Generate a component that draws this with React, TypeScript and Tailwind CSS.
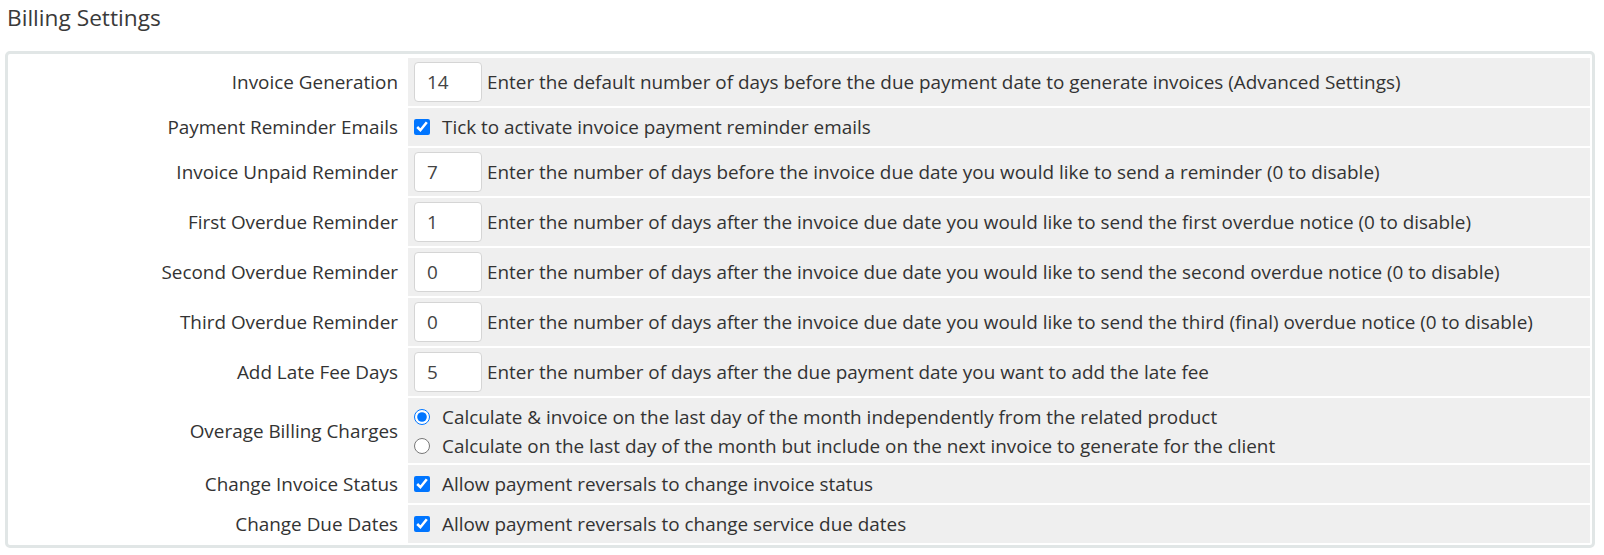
import React from 'react';

type Row =
  | { label: string; kind: 'input'; value: string; text: string }
  | { label: string; kind: 'check'; text: string }
  | { label: string; kind: 'radio'; options: { text: string; checked: boolean }[] };

const rows: Row[] = [
  {
    label: 'Invoice Generation',
    kind: 'input',
    value: '14',
    text: 'Enter the default number of days before the due payment date to generate invoices (Advanced Settings)',
  },
  { label: 'Payment Reminder Emails', kind: 'check', text: 'Tick to activate invoice payment reminder emails' },
  {
    label: 'Invoice Unpaid Reminder',
    kind: 'input',
    value: '7',
    text: 'Enter the number of days before the invoice due date you would like to send a reminder (0 to disable)',
  },
  {
    label: 'First Overdue Reminder',
    kind: 'input',
    value: '1',
    text: 'Enter the number of days after the invoice due date you would like to send the first overdue notice (0 to disable)',
  },
  {
    label: 'Second Overdue Reminder',
    kind: 'input',
    value: '0',
    text: 'Enter the number of days after the invoice due date you would like to send the second overdue notice (0 to disable)',
  },
  {
    label: 'Third Overdue Reminder',
    kind: 'input',
    value: '0',
    text: 'Enter the number of days after the invoice due date you would like to send the third (final) overdue notice (0 to disable)',
  },
  {
    label: 'Add Late Fee Days',
    kind: 'input',
    value: '5',
    text: 'Enter the number of days after the due payment date you want to add the late fee',
  },
  {
    label: 'Overage Billing Charges',
    kind: 'radio',
    options: [
      { text: 'Calculate & invoice on the last day of the month independently from the related product', checked: true },
      { text: 'Calculate on the last day of the month but include on the next invoice to generate for the client', checked: false },
    ],
  },
  { label: 'Change Invoice Status', kind: 'check', text: 'Allow payment reversals to change invoice status' },
  { label: 'Change Due Dates', kind: 'check', text: 'Allow payment reversals to change service due dates' },
];

function Field({ row }: { row: Row }) {
  if (row.kind === 'input') {
    return (
      <div className="flex items-center h-[48px] pl-[6px] bg-[#efefef]">
        <input
          type="text"
          defaultValue={row.value}
          className="w-[68px] h-[40px] pl-[12px] bg-white border border-[#d5d5d5] rounded-[4px] text-[#444] text-[18.9px] outline-none"
        />
        <span className="ml-[5px]">{row.text}</span>
      </div>
    );
  }
  if (row.kind === 'check') {
    return (
      <div className="flex items-center h-[38px] pl-[6px] bg-[#efefef]">
        <input type="checkbox" defaultChecked className="w-4 h-4 m-0 accent-[#0075ff]" />
        <span className="ml-[12px]">{row.text}</span>
      </div>
    );
  }
  return (
    <div className="flex flex-col justify-center h-[65px] pt-[2px] pl-[6px] bg-[#efefef]">
      {row.options.map((o) => (
        <label key={o.text} className="flex items-center h-[29px]">
          <input type="radio" name="overage" defaultChecked={o.checked} className="w-4 h-4 m-0 accent-[#0075ff]" />
          <span className="ml-[12px]">{o.text}</span>
        </label>
      ))}
    </div>
  );
}

export default function App() {
  return (
    <div className="min-h-[555px] bg-white text-[#333] font-['Open_Sans',sans-serif]">
      {/* Page heading */}
      <div className="h-[30px] mt-[3px] pl-[7px] text-[22.7px] leading-[30px] text-[#3a3a3a]">Billing Settings</div>

      {/* Settings table */}
      <div className="ml-[5px] mt-[18px] w-[1590px] border-[3px] border-[#e1e6e6] rounded-[5px] px-[2px] pt-[4px] pb-[2px]">
        <div className="grid grid-cols-[396px_1fr] gap-[2px] text-[18.9px] leading-[28px]">
          {rows.map((row) => (
            <React.Fragment key={row.label}>
              <div className="flex items-center justify-end pr-[8px]">{row.label}</div>
              <Field row={row} />
            </React.Fragment>
          ))}
        </div>
      </div>
    </div>
  );
}
